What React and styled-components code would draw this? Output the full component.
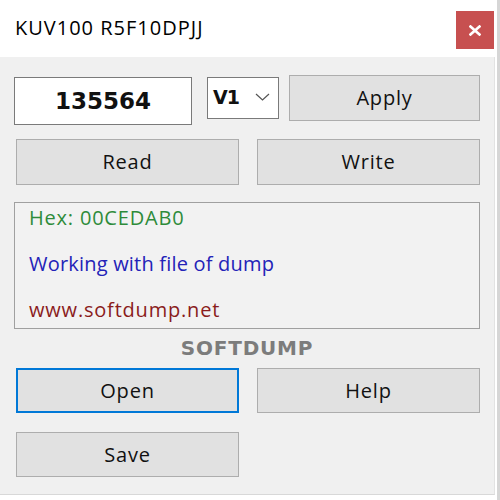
import React from 'react'
import {createGlobalStyle, styled} from 'styled-components'

const GlobalStyle = createGlobalStyle`
    html, body {
        margin: 0;
        padding: 0;
        background: #d6d6d6;
    }
    body {
        font-family: "Open Sans", "Noto Sans", "Liberation Sans", sans-serif;
        color: #000;
    }
`

const Window = styled.div`
    width: 497px;
    height: 500px;
    background: #ffffff;
    display: flex;
    flex-direction: column;
`

const TitleBar = styled.div`
    height: 57px;
    display: flex;
    align-items: flex-start;
    justify-content: space-between;
    box-sizing: border-box;
    padding: 11px 3px 0 15px;
`

const Title = styled.div`
    font-size: 20px;
    line-height: 34px;
    letter-spacing: 1px;
`

const CloseButton = styled.div`
    width: 38px;
    height: 38px;
    background: #c75050;
    color: #fff;
    display: flex;
    align-items: center;
    justify-content: center;
`

const Body = styled.div`
    width: 495px;
    height: 438px;
    box-sizing: border-box;
    background: #f0f0f0;
    border-right: 1px solid #e2e2e2;
    border-bottom: 1px solid #d8d8d8;
    padding: 18px 0 0 14px;
    display: flex;
    flex-direction: column;
`

const Row = styled.div`
    display: flex;
    align-items: flex-start;
    margin-top: ${p => p.$top ?? 0}px;
    padding-left: ${p => p.$indent ?? 0}px;
    gap: ${p => p.$gap ?? 18}px;
`

const NumberField = styled.div`
    width: 178px;
    height: 48px;
    margin-top: 2px;
    box-sizing: border-box;
    background: #fff;
    border: 1px solid #7a7a7a;
    display: flex;
    align-items: center;
    justify-content: center;
    font-family: "DejaVu Sans", Verdana, sans-serif;
    font-weight: bold;
    font-size: 23px;
    color: #111;
`

const Combo = styled.div`
    width: 72px;
    height: 42px;
    margin: 2px 10px 0 15px;
    box-sizing: border-box;
    background: #fff;
    border: 1px solid #7a7a7a;
    display: flex;
    align-items: center;
    padding: 0 8px 2px 5px;
    justify-content: space-between;
    font-family: "DejaVu Sans", Verdana, sans-serif;
    font-weight: bold;
    font-size: 19px;
    letter-spacing: -1px;
    color: #111;
`

const Button = styled.div`
    width: ${p => p.$w ?? 223}px;
    height: ${p => p.$h ?? 46}px;
    box-sizing: border-box;
    background: #e1e1e1;
    border: ${p => p.$focused ? '2px solid #0078d7' : '1px solid #adadad'};
    display: flex;
    align-items: center;
    justify-content: center;
    font-size: 20px;
    letter-spacing: 0.8px;
    color: #111;
    padding-bottom: 1px;
`

const InfoBox = styled.div`
    width: 466px;
    height: 127px;
    margin-top: 17px;
    box-sizing: border-box;
    border: 1px solid #a0a0a0;
    background: #f2f2f2;
    padding: 2px 0 0 14px;
    display: flex;
    flex-direction: column;
    gap: 20px;
`

const InfoLine = styled.div`
    font-size: 20px;
    line-height: 26px;
    letter-spacing: ${p => p.$track ?? 0.8}px;
    color: ${p => p.$color};
`

const Brand = styled.div`
    width: 466px;
    text-align: center;
    margin-top: 4px;
    font-family: "DejaVu Sans", Verdana, sans-serif;
    font-weight: bold;
    font-size: 20px;
    line-height: 30px;
    letter-spacing: 0.8px;
    color: #7c7c7c;
`

const Chevron = () => (
    <svg width="15" height="8" viewBox="0 0 15 8">
        <path d="M1 1 L7.5 7 L14 1" fill="none" stroke="#555" strokeWidth="1.2"/>
    </svg>
)

const App = () => {
    return (
        <>
            <GlobalStyle/>
            <Window>
                <TitleBar>
                    <Title>KUV100 R5F10DPJJ</Title>
                    <CloseButton>
                        <svg width="12" height="11" viewBox="0 0 12 11">
                            <path d="M1.5 1.5 L10.5 9.5 M10.5 1.5 L1.5 9.5" stroke="#fff" strokeWidth="2.6" strokeLinecap="square"/>
                        </svg>
                    </CloseButton>
                </TitleBar>
                <Body>
                    <Row $gap={0}>
                        <NumberField>135564</NumberField>
                        <Combo>V1 <Chevron/></Combo>
                        <Button $w={191}>Apply</Button>
                    </Row>
                    <Row $top={14} $indent={2}>
                        <Button>Read</Button>
                        <Button>Write</Button>
                    </Row>
                    <InfoBox>
                        <InfoLine $color="#2e8b3a">Hex: 00CEDAB0</InfoLine>
                        <InfoLine $color="#2323b8" $track={0.2}>Working with file of dump</InfoLine>
                        <InfoLine $color="#8a1c1c">www.softdump.net</InfoLine>
                    </InfoBox>
                    <Brand>SOFTDUMP</Brand>
                    <Row $top={5} $indent={2}>
                        <Button $h={45} $focused>Open</Button>
                        <Button $h={45}>Help</Button>
                    </Row>
                    <Row $top={19} $indent={2}>
                        <Button $h={45}>Save</Button>
                    </Row>
                </Body>
            </Window>
        </>
    )
}

export default App
